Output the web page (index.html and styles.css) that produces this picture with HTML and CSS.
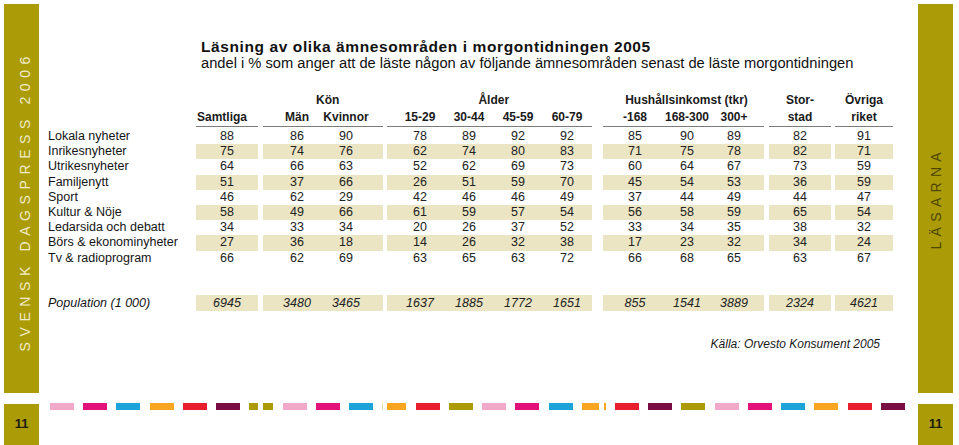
FILE: index.html
```html
<!DOCTYPE html>
<html lang="sv">
<head>
<meta charset="utf-8">
<title>Läsning av olika ämnesområden</title>
<link rel="stylesheet" href="styles.css">
</head>
<body>
<div class="page">
  <aside class="side side-left">
    <div class="bar"><span class="vtext vtext-left">SVENSK DAGSPRESS 2006</span></div>
    <div class="pno">11</div>
  </aside>

  <main class="main">
    <h1 class="title">Läsning av olika ämnesområden i morgontidningen 2005</h1>
    <p class="subtitle">andel i % som anger att de läste någon av följande ämnesområden senast de läste morgontidningen</p>

    <div class="table">
      <div class="hrow">
        <div class="lab"></div>
        <div class="g g1"></div>
        <div class="g g2 gh">Kön</div>
        <div class="g g3 gh">Ålder</div>
        <div class="g g4 gh">Hushållsinkomst (tkr)</div>
        <div class="g g5 gh">Stor-</div>
        <div class="g g6 gh">Övriga</div>
      </div>
      <div class="hrow hrow2">
        <div class="lab"></div>
        <div class="g g1"><span class="c c-left">Samtliga</span></div>
        <div class="g g2"><span class="c">Män</span><span class="c">Kvinnor</span></div>
        <div class="g g3"><span class="c">15-29</span><span class="c">30-44</span><span class="c">45-59</span><span class="c">60-79</span></div>
        <div class="g g4"><span class="c">-168</span><span class="c">168-300</span><span class="c">300+</span></div>
        <div class="g g5"><span class="c">stad</span></div>
        <div class="g g6"><span class="c">riket</span></div>
      </div>

      <div class="rows">
        <div class="row">
          <div class="lab">Lokala nyheter</div>
          <div class="g g1"><span class="c">88</span></div>
          <div class="g g2"><span class="c">86</span><span class="c">90</span></div>
          <div class="g g3"><span class="c">78</span><span class="c">89</span><span class="c">92</span><span class="c">92</span></div>
          <div class="g g4"><span class="c">85</span><span class="c">90</span><span class="c">89</span></div>
          <div class="g g5"><span class="c">82</span></div>
          <div class="g g6"><span class="c">91</span></div>
        </div>
        <div class="row shade">
          <div class="lab">Inrikesnyheter</div>
          <div class="g g1"><span class="c">75</span></div>
          <div class="g g2"><span class="c">74</span><span class="c">76</span></div>
          <div class="g g3"><span class="c">62</span><span class="c">74</span><span class="c">80</span><span class="c">83</span></div>
          <div class="g g4"><span class="c">71</span><span class="c">75</span><span class="c">78</span></div>
          <div class="g g5"><span class="c">82</span></div>
          <div class="g g6"><span class="c">71</span></div>
        </div>
        <div class="row">
          <div class="lab">Utrikesnyheter</div>
          <div class="g g1"><span class="c">64</span></div>
          <div class="g g2"><span class="c">66</span><span class="c">63</span></div>
          <div class="g g3"><span class="c">52</span><span class="c">62</span><span class="c">69</span><span class="c">73</span></div>
          <div class="g g4"><span class="c">60</span><span class="c">64</span><span class="c">67</span></div>
          <div class="g g5"><span class="c">73</span></div>
          <div class="g g6"><span class="c">59</span></div>
        </div>
        <div class="row shade">
          <div class="lab">Familjenytt</div>
          <div class="g g1"><span class="c">51</span></div>
          <div class="g g2"><span class="c">37</span><span class="c">66</span></div>
          <div class="g g3"><span class="c">26</span><span class="c">51</span><span class="c">59</span><span class="c">70</span></div>
          <div class="g g4"><span class="c">45</span><span class="c">54</span><span class="c">53</span></div>
          <div class="g g5"><span class="c">36</span></div>
          <div class="g g6"><span class="c">59</span></div>
        </div>
        <div class="row">
          <div class="lab">Sport</div>
          <div class="g g1"><span class="c">46</span></div>
          <div class="g g2"><span class="c">62</span><span class="c">29</span></div>
          <div class="g g3"><span class="c">42</span><span class="c">46</span><span class="c">46</span><span class="c">49</span></div>
          <div class="g g4"><span class="c">37</span><span class="c">44</span><span class="c">49</span></div>
          <div class="g g5"><span class="c">44</span></div>
          <div class="g g6"><span class="c">47</span></div>
        </div>
        <div class="row shade">
          <div class="lab">Kultur &amp; Nöje</div>
          <div class="g g1"><span class="c">58</span></div>
          <div class="g g2"><span class="c">49</span><span class="c">66</span></div>
          <div class="g g3"><span class="c">61</span><span class="c">59</span><span class="c">57</span><span class="c">54</span></div>
          <div class="g g4"><span class="c">56</span><span class="c">58</span><span class="c">59</span></div>
          <div class="g g5"><span class="c">65</span></div>
          <div class="g g6"><span class="c">54</span></div>
        </div>
        <div class="row">
          <div class="lab">Ledarsida och debatt</div>
          <div class="g g1"><span class="c">34</span></div>
          <div class="g g2"><span class="c">33</span><span class="c">34</span></div>
          <div class="g g3"><span class="c">20</span><span class="c">26</span><span class="c">37</span><span class="c">52</span></div>
          <div class="g g4"><span class="c">33</span><span class="c">34</span><span class="c">35</span></div>
          <div class="g g5"><span class="c">38</span></div>
          <div class="g g6"><span class="c">32</span></div>
        </div>
        <div class="row shade">
          <div class="lab">Börs &amp; ekonominyheter</div>
          <div class="g g1"><span class="c">27</span></div>
          <div class="g g2"><span class="c">36</span><span class="c">18</span></div>
          <div class="g g3"><span class="c">14</span><span class="c">26</span><span class="c">32</span><span class="c">38</span></div>
          <div class="g g4"><span class="c">17</span><span class="c">23</span><span class="c">32</span></div>
          <div class="g g5"><span class="c">34</span></div>
          <div class="g g6"><span class="c">24</span></div>
        </div>
        <div class="row">
          <div class="lab">Tv &amp; radioprogram</div>
          <div class="g g1"><span class="c">66</span></div>
          <div class="g g2"><span class="c">62</span><span class="c">69</span></div>
          <div class="g g3"><span class="c">63</span><span class="c">65</span><span class="c">63</span><span class="c">72</span></div>
          <div class="g g4"><span class="c">66</span><span class="c">68</span><span class="c">65</span></div>
          <div class="g g5"><span class="c">63</span></div>
          <div class="g g6"><span class="c">67</span></div>
        </div>
      </div>

      <div class="row shade pop">
        <div class="lab">Population (1 000)</div>
        <div class="g g1"><span class="c">6945</span></div>
        <div class="g g2"><span class="c">3480</span><span class="c">3465</span></div>
        <div class="g g3"><span class="c">1637</span><span class="c">1885</span><span class="c">1772</span><span class="c">1651</span></div>
        <div class="g g4"><span class="c">855</span><span class="c">1541</span><span class="c">3889</span></div>
        <div class="g g5"><span class="c">2324</span></div>
        <div class="g g6"><span class="c">4621</span></div>
      </div>
    </div>

    <p class="source">Källa: Orvesto Konsument 2005</p>

    <div class="dashes">
      <span class="d pink"></span>
      <span class="d magenta"></span>
      <span class="d blue"></span>
      <span class="d orange"></span>
      <span class="d red"></span>
      <span class="d maroon"></span>
      <span class="d split"><i class="olive w9"></i><i class="olive w10"></i></span>
      <span class="d pink"></span>
      <span class="d magenta"></span>
      <span class="d blue"></span>
      <span class="d split"><i class="pale w1"></i><i class="orange w19"></i></span>
      <span class="d red"></span>
      <span class="d olive"></span>
      <span class="d pink"></span>
      <span class="d magenta"></span>
      <span class="d blue"></span>
      <span class="d split"><i class="orange w17"></i><i class="orange w2"></i></span>
      <span class="d red"></span>
      <span class="d maroon"></span>
      <span class="d olive"></span>
      <span class="d pink"></span>
      <span class="d magenta"></span>
      <span class="d blue"></span>
      <span class="d orange"></span>
      <span class="d red"></span>
      <span class="d maroon"></span>
    </div>
  </main>

  <aside class="side side-right">
    <div class="bar"><span class="vtext vtext-right">LÄSARNA</span></div>
    <div class="pno">11</div>
  </aside>
</div>
</body>
</html>
```

FILE: styles.css
```css
* { box-sizing: border-box; }

html, body {
  margin: 0;
  padding: 0;
  background: #ffffff;
}

body {
  font-family: "Liberation Sans", Arial, Helvetica, sans-serif;
  color: #1a1a1a;
}

.page {
  width: 959px;
  height: 445px;
  display: flex;
  overflow: hidden;
}

/* ---------- side bars ---------- */
.side {
  width: 35px;
  display: flex;
  flex-direction: column;
  flex: none;
}
.side-left { margin-left: 4px; }
.side-right { margin-right: 6px; }

.bar {
  margin-top: 4px;
  height: 389px;
  background: #aa9b07;
  display: flex;
  align-items: center;
  justify-content: center;
}

.vtext {
  writing-mode: vertical-rl;
  transform: rotate(180deg);
  font-size: 14px;
  line-height: 14px;
  white-space: nowrap;
}
.vtext-left {
  color: #f1ecc6;
  letter-spacing: 5.6px;
  margin-left: 7px;
  margin-bottom: -5px;
}
.vtext-right {
  color: #4f4600;
  letter-spacing: 5.3px;
}

.pno {
  margin-top: 11px;
  height: 41px;
  background: #aa9b07;
  display: flex;
  align-items: center;
  justify-content: center;
  font-weight: bold;
  font-size: 13px;
  color: #1d1d10;
  padding-bottom: 2px;
}

/* ---------- main column ---------- */
.main {
  flex: 1;
  display: flex;
  flex-direction: column;
  padding-top: 39px;
  padding-left: 8px;
}

.title {
  margin: 0 0 0 154px;
  font-size: 15.5px;
  line-height: 16px;
  font-weight: bold;
  letter-spacing: 0.6px;
  color: #111;
}

.subtitle {
  margin: 0 0 0 154px;
  font-size: 14.7px;
  line-height: 16px;
  color: #111;
}

/* ---------- table ---------- */
.table {
  margin-top: 22px;
  font-size: 12.5px;
}

.hrow, .row {
  display: flex;
  align-items: stretch;
}

.hrow {
  height: 15px;
  line-height: 15px;
  font-weight: bold;
  font-size: 12px;
  color: #1a1a1a;
}

.hrow2 {
  height: 19px;
}
.hrow2 .g {
  border-bottom: 1px solid #7c7c7c;
  padding-top: 2px;
  padding-bottom: 1px;
}

.lab {
  width: 149px;
  flex: none;
  padding-left: 1px;
  white-space: nowrap;
}

.g {
  display: flex;
  flex: none;
}
.gh { justify-content: center; }

.c {
  display: block;
  text-align: center;
  white-space: nowrap;
}
.g1 .c-left {
  text-align: left;
  padding-left: 1px;
}

.g1 { width: 62px; }
.g1 .c { width: 62px; }

.g2 { width: 120px; margin-left: 5px; padding-left: 9.5px; }
.g2 .c { width: 49px; }

.g3 { width: 205px; margin-left: 4px; padding-left: 8.5px; }
.g3 .c { width: 49px; }

.g4 { width: 161px; margin-left: 11px; padding-left: 6px; }
.g4 .c { width: 52px; }
.g4 .c:last-child { width: 42px; }

.g5 { width: 62px; margin-left: 5px; }
.g5 .c { width: 62px; }

.g6 { width: 58px; margin-left: 4px; }
.g6 .c { width: 58px; }

.hrow .g5, .hrow .g6 { justify-content: center; }

.rows {
  margin-top: 2px;
}

.row {
  height: 15.2px;
  line-height: 15.2px;
  color: #222;
}

.row .lab { color: #141414; }

.shade .g { background: #ebe5c4; }

.pop {
  margin-top: 29.2px;
  height: 16px;
  line-height: 16px;
  font-style: italic;
}

/* ---------- source ---------- */
.source {
  margin: 26px 0 0 0;
  width: 833px;
  text-align: right;
  font-size: 12px;
  line-height: 15px;
  font-style: italic;
  color: #1a1a1a;
}

/* ---------- colour dashes ---------- */
.dashes {
  margin-top: 51px;
  margin-left: 3px;
  display: flex;
  gap: 9.24px;
  height: 7px;
}

.d {
  width: 24px;
  height: 7px;
  flex: none;
}
.split {
  display: flex;
  justify-content: space-between;
}
.split i { display: block; height: 7px; }
.w1 { width: 1px; }
.w2 { width: 2px; }
.w9 { width: 9px; }
.w10 { width: 10px; }
.w17 { width: 17px; }
.w19 { width: 19px; }

.pink { background: #f2a9c9; }
.magenta { background: #e2127a; }
.blue { background: #1ba3da; }
.orange { background: #f8a622; }
.red { background: #e91f2f; }
.maroon { background: #7b0d45; }
.olive { background: #aa9b07; }
.pale { background: #f6d9a8; }
.split.pink, .split.olive { background: none; }
```
